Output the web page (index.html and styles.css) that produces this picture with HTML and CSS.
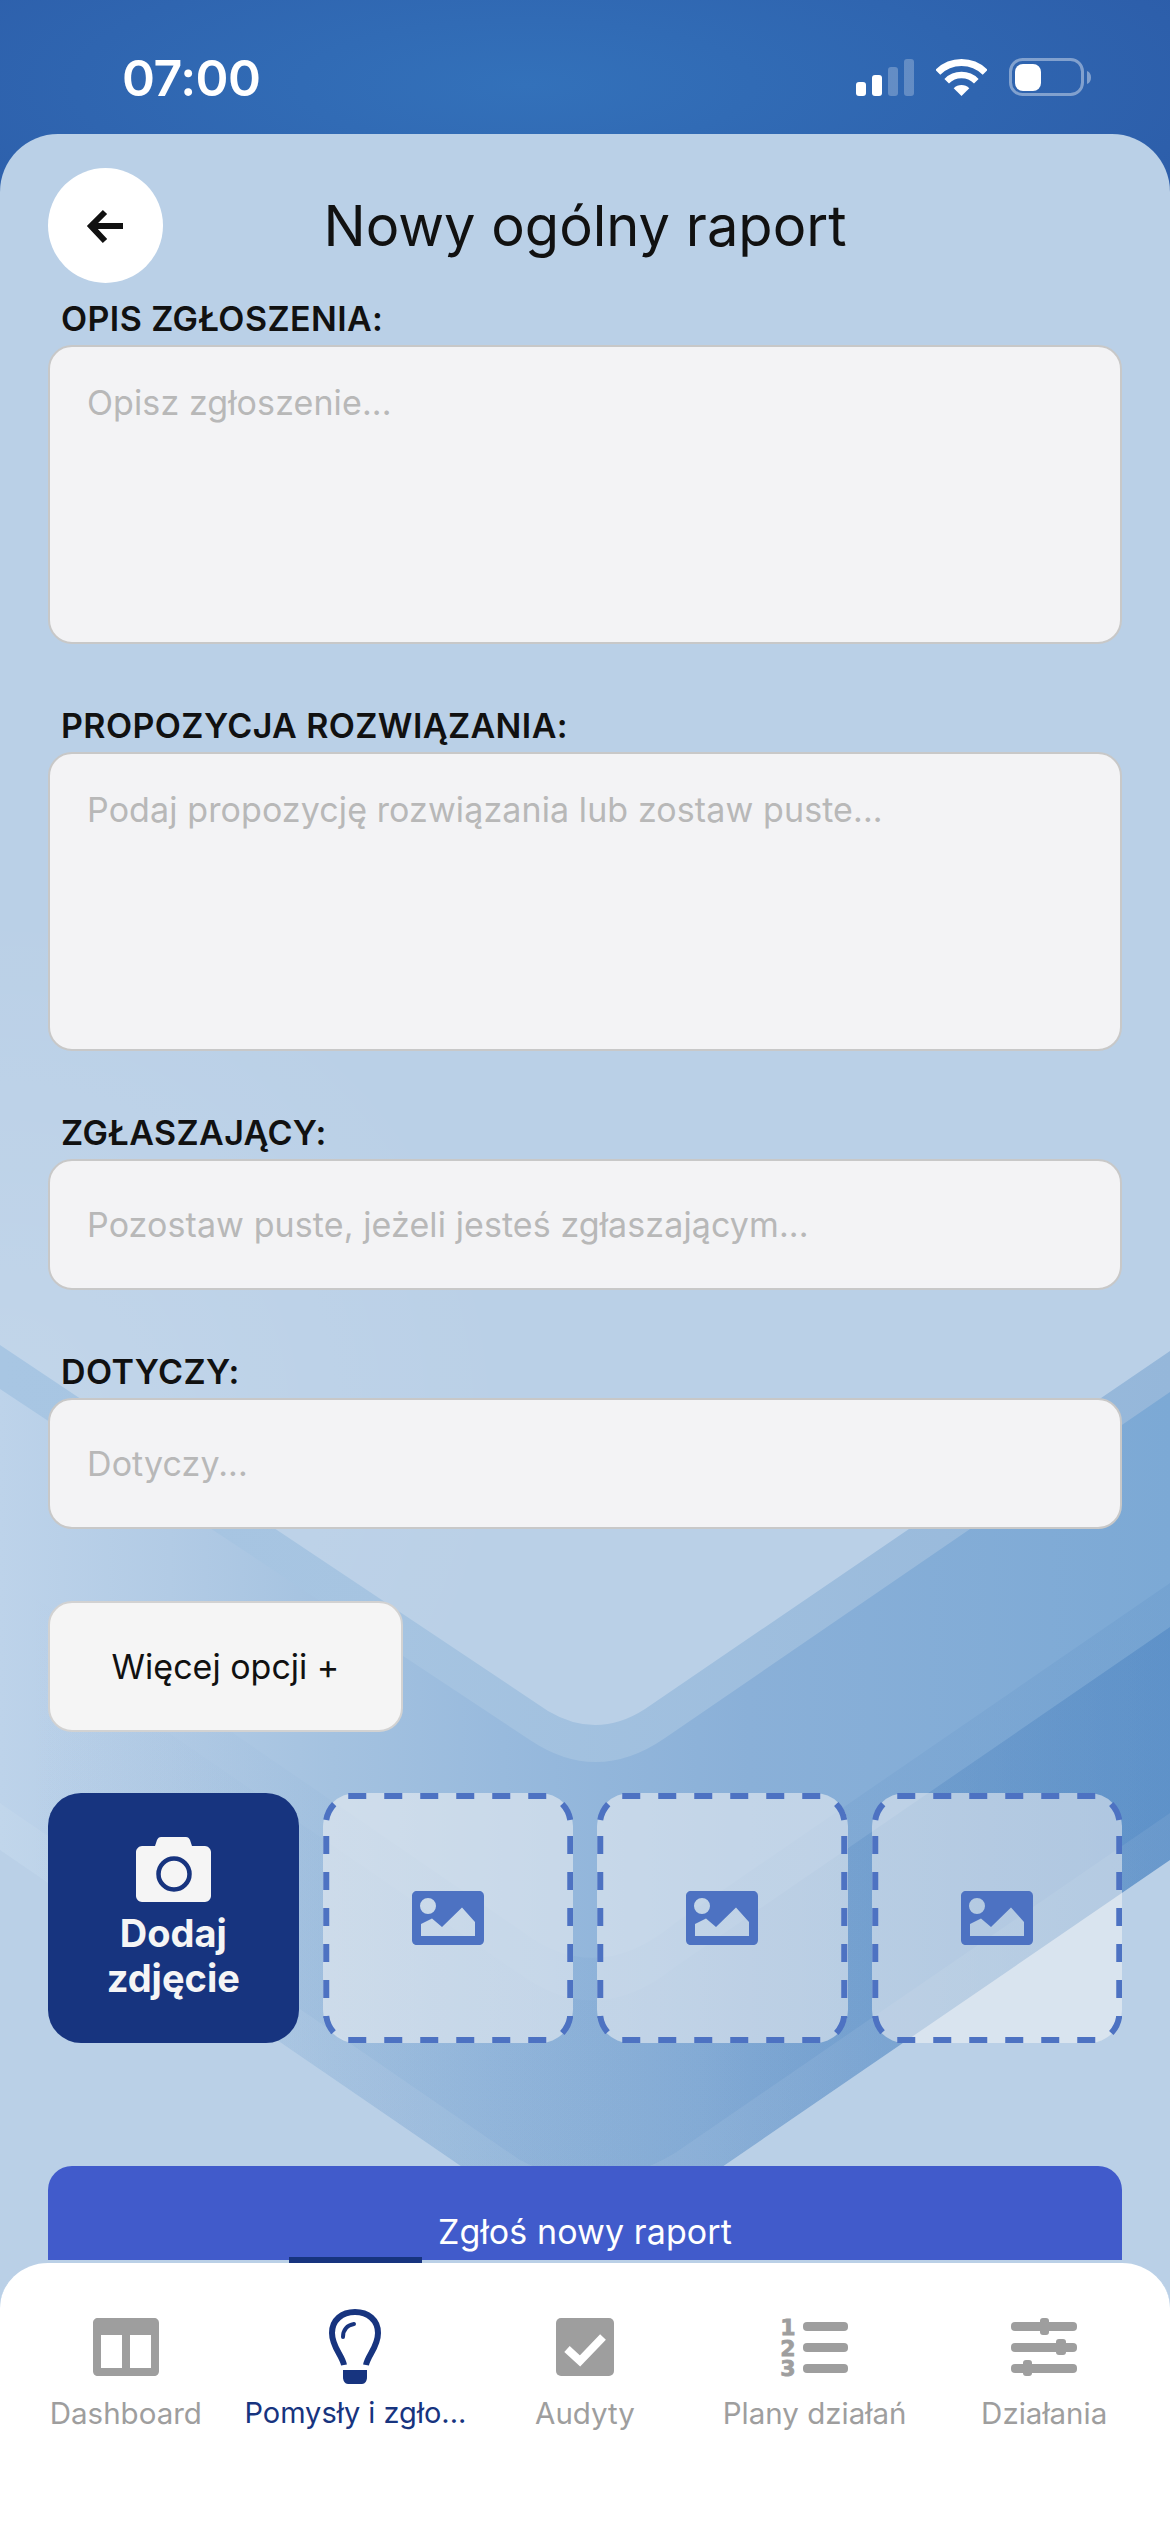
FILE: index.html
```html
<!DOCTYPE html>
<html lang="pl">
<head>
    <meta charset="UTF-8">
    <meta name="viewport" content="width=device-width, initial-scale=1.0">
    <title>Nowy ogólny raport</title>
    <link rel="stylesheet" href="styles.css">
</head>
<body>
    <div class="status-bar">
        <span class="status-time">07:00</span>
        <div class="status-icons">
            <svg class="icon-signal" viewBox="0 0 58 38">
                <rect x="0" y="24" width="10" height="14" rx="3" fill="#fff"/>
                <rect x="16" y="17" width="10" height="21" rx="3" fill="#fff"/>
                <rect x="32" y="9" width="10" height="29" rx="3" fill="#fff" fill-opacity="0.25"/>
                <rect x="48" y="1" width="10" height="37" rx="3" fill="#fff" fill-opacity="0.25"/>
            </svg>
            <svg class="icon-wifi" viewBox="0 0 51 38">
                <path d="M1.8 14.3A33.5 33.5 0 0 1 49.2 14.3" fill="none" stroke="#fff" stroke-width="7"/>
                <path d="M10.7 23.2A21 21 0 0 1 40.3 23.2" fill="none" stroke="#fff" stroke-width="6.5"/>
                <path d="M17.7 30.2A11 11 0 0 1 33.3 30.2L25.5 38Z" fill="#fff"/>
            </svg>
            <svg class="icon-battery" viewBox="0 0 82 38">
                <rect x="1.5" y="1.5" width="72" height="35" rx="12" fill="none" stroke="#fff" stroke-opacity="0.4" stroke-width="3"/>
                <rect x="6" y="6" width="26" height="27" rx="8" fill="#fff"/>
                <path d="M78 13C81 14 82 17 82 19.500C82 22 81 25 78 26Z" fill="#fff" fill-opacity="0.4"/>
            </svg>
        </div>
    </div>

    <main class="sheet">
        <!-- tlo: warstwy szewronow -->
        <svg class="backdrop" viewBox="0 134 1170 2398" preserveAspectRatio="none">
            <defs>
                <radialGradient id="glow" gradientUnits="userSpaceOnUse" cx="0" cy="1420" r="520">
                    <stop offset="0" stop-color="#fff" stop-opacity="0.12"/>
                    <stop offset="1" stop-color="#fff" stop-opacity="0"/>
                </radialGradient>
                <linearGradient id="layerA" gradientUnits="userSpaceOnUse" x1="0" y1="0" x2="1170" y2="0">
                    <stop offset="0" stop-color="#a8c6e3"/>
                    <stop offset="0.34" stop-color="#a6c4e1"/>
                    <stop offset="1" stop-color="#95b7da"/>
                </linearGradient>
                <linearGradient id="layerB" gradientUnits="userSpaceOnUse" x1="0" y1="0" x2="1170" y2="0">
                    <stop offset="0" stop-color="#bdd3ea"/>
                    <stop offset="0.145" stop-color="#b2cbe5"/>
                    <stop offset="0.285" stop-color="#a4c2e0"/>
                    <stop offset="0.43" stop-color="#98badd"/>
                    <stop offset="0.64" stop-color="#8ab0d8"/>
                    <stop offset="1" stop-color="#7ca9d5"/>
                </linearGradient>
                <linearGradient id="layerC" gradientUnits="userSpaceOnUse" x1="0" y1="0" x2="1170" y2="0">
                    <stop offset="0" stop-color="#1f5ea8" stop-opacity="0"/>
                    <stop offset="1" stop-color="#1f5ea8" stop-opacity="0.08"/>
                </linearGradient>
                <linearGradient id="layerD" gradientUnits="userSpaceOnUse" x1="0" y1="0" x2="1170" y2="0">
                    <stop offset="0" stop-color="#1f5ea8" stop-opacity="0"/>
                    <stop offset="0.6" stop-color="#1f5ea8" stop-opacity="0.04"/>
                    <stop offset="1" stop-color="#2a6ab5" stop-opacity="0.3"/>
                </linearGradient>
            </defs>
            <rect x="0" y="134" width="1170" height="2398" fill="#bad0e7"/>
            <rect x="0" y="900" width="700" height="1000" fill="url(#glow)"/>
            <path d="M0 1345L548 1711Q597 1740 645 1709L1170 1351V2532H0Z" fill="url(#layerA)"/>
            <path d="M0 1389L530 1740Q597 1785 665 1738L1170 1392V2532H0Z" fill="url(#layerB)"/>
            <path d="M0 1573L520 1930Q597 1989 675 1923L1170 1583V2532H0Z" fill="url(#layerC)"/>
            <path d="M0 1617L520 1974Q597 2030 675 1967L1170 1627V2532H0Z" fill="url(#layerD)"/>
            <path d="M0 1803L520 2160Q597 2200 675 2153L1170 1813V2532H0Z" fill="#fff" fill-opacity="0.07"/>
            <path d="M0 1850L592 2256L1170 1860V2532H0Z" fill="#bad0e7"/>
        </svg>

        <div class="page-head">
            <button class="back-btn">
                <svg viewBox="0 0 40 40" width="40" height="40">
                    <path d="M37 20H6M19 6L5 20L19 35" fill="none" stroke="#111" stroke-width="6"/>
                </svg>
            </button>
            <h1 class="page-title">Nowy ogólny raport</h1>
        </div>

        <div class="field">
            <div class="field-label">OPIS ZGŁOSZENIA:</div>
            <div class="field-box field-box-tall">Opisz zgłoszenie...</div>
        </div>
        <div class="field">
            <div class="field-label">PROPOZYCJA ROZWIĄZANIA:</div>
            <div class="field-box field-box-tall">Podaj propozycję rozwiązania lub zostaw puste...</div>
        </div>
        <div class="field">
            <div class="field-label">ZGŁASZAJĄCY:</div>
            <div class="field-box">Pozostaw puste, jeżeli jesteś zgłaszającym...</div>
        </div>
        <div class="field">
            <div class="field-label">DOTYCZY:</div>
            <div class="field-box">Dotyczy...</div>
        </div>

        <button class="more-btn">Więcej opcji +</button>

        <div class="photos">
            <div class="photo-add">
                <svg viewBox="0 0 75 65" width="75" height="65">
                    <path d="M6 9H19L21 3C22 1 23 0 25 0H50C52 0 53 1 54 3L56 9H69C72 9 75 12 75 15V59C75 62 72 65 69 65H6C3 65 0 62 0 59V15C0 12 3 9 6 9Z" fill="#f5f5f5"/>
                    <circle cx="38" cy="37" r="15.500" fill="none" stroke="#17347f" stroke-width="4.500"/>
                </svg>
                <span>Dodaj<br>zdjęcie</span>
            </div>
            <div class="photo-slot">
                <svg class="slot-border" viewBox="0 0 250 250">
                    <path d="M25 3H225M25 247H225M3 43V225M247 43V225M3 27A30 30 0 0 1 11 11M239 11A30 30 0 0 1 247 27M3 223A30 30 0 0 0 11 240M239 240A30 30 0 0 0 247 223" fill="none" stroke="#4d72c2" stroke-width="6" stroke-dasharray="18 18"/>
                </svg>
                <svg viewBox="0 0 72 54" width="72" height="54">
                    <path fill-rule="evenodd" fill="#4d72c2" d="M5 0H67C70 0 72 2 72 5V49C72 52 70 54 67 54H5C2 54 0 52 0 49V5C0 2 2 0 5 0ZM9 45H63V31L50 16.500L30 36L20 27.500L9 33ZM16 7A8 8 0 1 0 16 23A8 8 0 1 0 16 7Z"/>
                </svg>
            </div>
            <div class="photo-slot">
                <svg class="slot-border" viewBox="0 0 250 250">
                    <path d="M25 3H225M25 247H225M3 43V225M247 43V225M3 27A30 30 0 0 1 11 11M239 11A30 30 0 0 1 247 27M3 223A30 30 0 0 0 11 240M239 240A30 30 0 0 0 247 223" fill="none" stroke="#4d72c2" stroke-width="6" stroke-dasharray="18 18"/>
                </svg>
                <svg viewBox="0 0 72 54" width="72" height="54">
                    <path fill-rule="evenodd" fill="#4d72c2" d="M5 0H67C70 0 72 2 72 5V49C72 52 70 54 67 54H5C2 54 0 52 0 49V5C0 2 2 0 5 0ZM9 45H63V31L50 16.500L30 36L20 27.500L9 33ZM16 7A8 8 0 1 0 16 23A8 8 0 1 0 16 7Z"/>
                </svg>
            </div>
            <div class="photo-slot">
                <svg class="slot-border" viewBox="0 0 250 250">
                    <path d="M25 3H225M25 247H225M3 43V225M247 43V225M3 27A30 30 0 0 1 11 11M239 11A30 30 0 0 1 247 27M3 223A30 30 0 0 0 11 240M239 240A30 30 0 0 0 247 223" fill="none" stroke="#4d72c2" stroke-width="6" stroke-dasharray="18 18"/>
                </svg>
                <svg viewBox="0 0 72 54" width="72" height="54">
                    <path fill-rule="evenodd" fill="#4d72c2" d="M5 0H67C70 0 72 2 72 5V49C72 52 70 54 67 54H5C2 54 0 52 0 49V5C0 2 2 0 5 0ZM9 45H63V31L50 16.500L30 36L20 27.500L9 33ZM16 7A8 8 0 1 0 16 23A8 8 0 1 0 16 7Z"/>
                </svg>
            </div>
        </div>

        <button class="submit-btn">Zgłoś nowy raport</button>
    </main>

    <nav class="tabs">
        <div class="tab">
            <div class="tab-icon">
                <svg viewBox="0 0 66 58" width="66" height="58">
                    <path fill-rule="evenodd" fill="#9e9e9e" d="M5 0H61C64 0 66 2 66 5V53C66 56 64 58 61 58H5C2 58 0 56 0 53V5C0 2 2 0 5 0ZM8 17V50H29V17ZM37 17V50H58V17Z"/>
                </svg>
            </div>
            <span class="tab-label">Dashboard</span>
        </div>
        <div class="tab tab-active">
            <div class="tab-icon">
                <svg viewBox="0 0 52 75" width="52" height="75">
                    <path d="M15 56C13 46 3 38 3 24C3 11 13 3 26 3C39 3 49 11 49 24C49 38 39 46 37 56" fill="none" stroke="#17347f" stroke-width="6"/>
                    <path d="M14 28C14 21 18 16 25 15" fill="none" stroke="#17347f" stroke-width="4" stroke-linecap="round"/>
                    <path d="M14 61H38V68C38 72 36 75 33 75H19C16 75 14 72 14 68Z" fill="#17347f"/>
                </svg>
            </div>
            <span class="tab-label">Pomysły i zgło...</span>
        </div>
        <div class="tab">
            <div class="tab-icon">
                <svg viewBox="0 0 58 58" width="58" height="58">
                    <rect width="58" height="58" rx="5" fill="#9e9e9e"/>
                    <path d="M11 31L24 43L47 19" fill="none" stroke="#fff" stroke-width="8"/>
                </svg>
            </div>
            <span class="tab-label">Audyty</span>
        </div>
        <div class="tab">
            <div class="tab-icon">
                <svg class="plan-icon" viewBox="0 0 66 58" width="66" height="58">
                    <text class="plan-num" x="6" y="17">1</text>
                    <text class="plan-num" x="6" y="38">2</text>
                    <text class="plan-num" x="6" y="58">3</text>
                    <rect x="21" y="4" width="45" height="9" rx="4" fill="#9e9e9e"/>
                    <rect x="21" y="25" width="45" height="9" rx="4" fill="#9e9e9e"/>
                    <rect x="21" y="46" width="45" height="9" rx="4" fill="#9e9e9e"/>
                </svg>
            </div>
            <span class="tab-label">Plany działań</span>
        </div>
        <div class="tab">
            <div class="tab-icon">
                <svg viewBox="0 0 66 58" width="66" height="58" fill="#9e9e9e">
                    <rect x="0" y="4" width="66" height="9" rx="4"/>
                    <rect x="0" y="25" width="66" height="9" rx="4"/>
                    <rect x="0" y="46" width="66" height="9" rx="4"/>
                    <rect x="29" y="0" width="9" height="17" rx="3"/>
                    <rect x="45" y="21" width="10" height="16" rx="3"/>
                    <rect x="12" y="42" width="9" height="16" rx="3"/>
                </svg>
            </div>
            <span class="tab-label">Działania</span>
        </div>
    </nav>
</body>
</html>
```

FILE: styles.css
```css
* {
    box-sizing: border-box;
}

html, body {
    margin: 0;
    width: 1170px;
    height: 2532px;
    overflow: hidden;
}

body {
    position: relative;
    font-family: Inter, "Liberation Sans", sans-serif;
    color: #111;
    background: radial-gradient(ellipse 900px 260px at 45% 85px, #3371ba, #2b59a6);
}

button {
    font-family: inherit;
    cursor: pointer;
}

.status-bar {
    height: 134px;
    padding: 58px 79px 0 122px;
    display: flex;
    justify-content: space-between;
    align-items: flex-start;
}

.status-time {
    font-size: 50px;
    line-height: 40px;
    font-weight: 600;
    letter-spacing: -0.5px;
    color: #fff;
}

.status-icons {
    display: flex;
    gap: 22px;
}

.icon-signal { width: 58px; height: 38px; }
.icon-wifi { width: 51px; height: 38px; }
.icon-battery { width: 82px; height: 38px; }

.sheet {
    position: relative;
    height: 2398px;
    padding: 34px 48px 0;
    border-radius: 58px 58px 0 0;
    overflow: hidden;
    display: flex;
    flex-direction: column;
    align-items: flex-start;
}

.backdrop {
    position: absolute;
    left: 0;
    top: 0;
    width: 100%;
    height: 100%;
}

.page-head {
    position: relative;
    width: 100%;
    display: grid;
    grid-template-columns: 115px 1fr 115px;
    align-items: center;
    margin-bottom: 16px;
}

.back-btn {
    width: 115px;
    height: 115px;
    padding: 0;
    border: none;
    border-radius: 50%;
    background: #fff;
    display: flex;
    justify-content: center;
    align-items: center;
}

.page-title {
    margin: 0;
    text-align: center;
    font-size: 56px;
    font-weight: 400;
    color: #111;
}

.field {
    position: relative;
    width: 100%;
    margin-bottom: 62px;
}

.field-label {
    padding-left: 13px;
    margin-bottom: 6px;
    font-size: 34px;
    line-height: 40px;
    font-weight: 600;
    letter-spacing: 0.4px;
    color: #111;
}

.field-box {
    height: 131px;
    padding: 0 37px;
    display: flex;
    align-items: center;
    background: #f3f3f5;
    border: 2px solid #c8c8c8;
    border-radius: 24px;
    font-size: 34px;
    line-height: 42px;
    letter-spacing: 0.1px;
    color: #b8b8b8;
}

.field-box-tall {
    height: 299px;
    padding-top: 35px;
    align-items: flex-start;
}

.more-btn {
    position: relative;
    width: 355px;
    height: 131px;
    margin-top: 10px;
    padding: 0;
    background: #f5f5f5;
    border: 2px solid #d2d2d2;
    border-radius: 24px;
    font-size: 34px;
    color: #111;
}

.photos {
    position: relative;
    width: 100%;
    margin-top: 61px;
    display: grid;
    grid-template-columns: repeat(4, 1fr);
    gap: 24px;
}

.photo-add, .photo-slot {
    height: 250px;
    border-radius: 33px;
    display: flex;
    flex-direction: column;
    justify-content: center;
    align-items: center;
}

.photo-add {
    background: #17347f;
    font-size: 38px;
    line-height: 45px;
    font-weight: 700;
    text-align: center;
    color: #f5f5f5;
}

.photo-add svg {
    margin-top: 1px;
}

.photo-add span {
    margin-top: 9px;
}

.photo-slot {
    position: relative;
    background: rgba(245, 245, 245, 0.53);
}

.slot-border {
    position: absolute;
    left: 0;
    top: 0;
    width: 100%;
    height: 100%;
}

.submit-btn {
    position: relative;
    width: 100%;
    height: 131px;
    margin-top: 123px;
    padding: 0;
    flex-shrink: 0;
    background: #415bcb;
    border: none;
    border-radius: 24px;
    font-size: 34px;
    letter-spacing: 0.1px;
    color: #fff;
}

/* nawigacja dolna, lezy na przycisku */
.tabs {
    position: absolute;
    left: 0;
    right: 0;
    bottom: 0;
    height: 272px;
    padding: 46px 11px 0;
    display: flex;
    background: #fff;
    border-top: 3px solid #bad0e7;
    border-radius: 48px 48px 0 0;
}

.tab {
    position: relative;
    flex: 1;
    display: flex;
    flex-direction: column;
    align-items: center;
}

.tab-active::before {
    content: "";
    position: absolute;
    top: -52px;
    width: 133px;
    height: 6px;
    background: #17347f;
}

.tab-icon {
    height: 75px;
    display: flex;
    align-items: center;
}

.tab-label {
    margin-top: 11px;
    font-size: 29.5px;
    line-height: 36px;
    white-space: nowrap;
    color: #9e9e9e;
}

.tab-active .tab-label {
    font-size: 29px;
    color: #17347f;
}

.plan-icon {
    overflow: visible;
}

.plan-num {
    font-family: "DejaVu Sans", sans-serif;
    font-size: 22px;
    font-weight: 700;
    text-anchor: middle;
    fill: #9e9e9e;
    stroke: #9e9e9e;
    stroke-width: 0.8px;
}
```
